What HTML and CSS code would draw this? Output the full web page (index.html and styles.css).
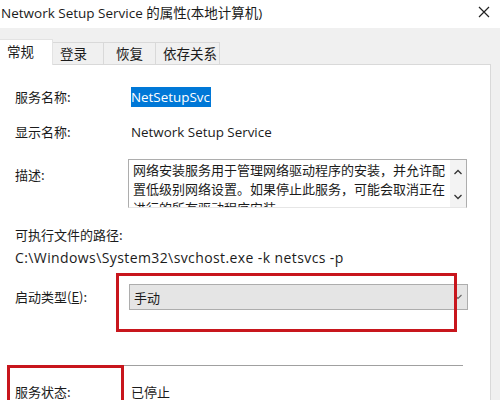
FILE: index.html
```html
<!DOCTYPE html>
<html lang="zh-CN">
<head>
    <meta charset="UTF-8">
    <meta name="viewport" content="width=device-width, initial-scale=1.0">
    <title>Network Setup Service 的属性(本地计算机)</title>
    <link rel="stylesheet" href="styles.css">
</head>
<body>

<div class="window">
    <div class="titlebar">
        <span class="title">Network Setup Service 的属性(本地计算机)</span>
        <svg class="close" width="12" height="12" viewBox="0 0 12 12">
            <path d="M1 1 L11 11 M11 1 L1 11" stroke="#222" stroke-width="1.2" fill="none"/>
        </svg>
    </div>

    <div class="tabstrip">
        <div class="tab active">常规</div>
        <div class="tab">登录</div>
        <div class="tab">恢复</div>
        <div class="tab">依存关系</div>
    </div>

    <div class="panel">
        <div class="row row-name">
            <span class="label">服务名称:</span>
            <span class="value"><span class="selected">NetSetupSvc</span></span>
        </div>
        <div class="row row-display">
            <span class="label">显示名称:</span>
            <span class="value">Network Setup Service</span>
        </div>
        <div class="row row-desc">
            <span class="label">描述:</span>
            <div class="textbox">
                <div class="textbox-text">网络安装服务用于管理网络驱动程序的安装，并允许配置低级别网络设置。如果停止此服务，可能会取消正在进行的所有驱动程序安装</div>
                <div class="scroll">
                    <svg width="10" height="8" viewBox="0 0 10 8"><path d="M1.5 6 L5 2.5 L8.5 6" stroke="#333" stroke-width="1.3" fill="none"/></svg>
                    <svg width="10" height="8" viewBox="0 0 10 8"><path d="M1.5 2 L5 5.5 L8.5 2" stroke="#333" stroke-width="1.3" fill="none"/></svg>
                </div>
            </div>
        </div>
        <div class="path-label">可执行文件的路径:</div>
        <div class="path">C:\Windows\System32\svchost.exe -k netsvcs -p</div>
        <div class="row row-startup">
            <span class="label">启动类型(<u>E</u>):</span>
            <div class="combo-wrap">
                <div class="combo">
                    <span>手动</span>
                    <svg width="10" height="8" viewBox="0 0 10 8"><path d="M1.5 2 L5 5.5 L8.5 2" stroke="#666" stroke-width="1.1" fill="none"/></svg>
                </div>
                <div class="mark mark-combo"></div>
            </div>
        </div>
        <div class="separator"></div>
        <div class="row row-status">
            <span class="label">服务状态:</span>
            <span class="value">已停止</span>
            <div class="mark mark-status"></div>
        </div>
    </div>
</div>

</body>
</html>
```

FILE: styles.css
```css
body {
    margin: 0;
    padding: 0;
    width: 500px;
    height: 400px;
    overflow: hidden;
    background-color: #f0f0f0;
    font-family: "Open Sans", "Noto Sans CJK SC", sans-serif;
    font-size: 13px;
    color: #1b1b1b;
}

.window {
    height: 400px;
    display: flex;
    flex-direction: column;
}

.titlebar {
    height: 28px;
    background-color: #fff;
    display: flex;
    align-items: center;
    justify-content: space-between;
    padding: 0 10px 4px 1px;
    box-sizing: border-box;
    font-size: 13.5px;
}

.tabstrip {
    height: 36px;
    display: flex;
    align-items: flex-end;
    padding-right: 10px;
}

.tab {
    height: 22px;
    box-sizing: border-box;
    padding: 0 6px 0 8px;
    line-height: 21px;
    white-space: nowrap;
    border: 1px solid #d9d9d9;
    border-bottom: none;
    border-left: none;
    background-color: #f0f0f0;
    font-family: "Noto Sans CJK SC", sans-serif;
    font-size: 13.5px;
}

.tab:nth-child(2) { width: 51px; padding-left: 7px; }
.tab:nth-child(3) { width: 52px; padding-left: 12px; }
.tab:nth-child(4) { width: 64px; padding-left: 7px; }

.tab.active {
    width: 53px;
    height: 26px;
    margin-bottom: -1px;
    padding-left: 7px;
    line-height: 22px;
    background-color: #fff;
    border-color: #e3e3e3;
    position: relative;
}

.panel {
    flex: 1;
    margin-right: 9px;
    background-color: #fff;
    border-top: 1px solid #d9d9d9;
    border-right: 1px solid #d9d9d9;
    padding: 23px 0 0 15px;
    overflow: hidden;
}

.row {
    display: grid;
    grid-template-columns: 116px 1fr;
    align-items: center;
    position: relative;
}

.label,
.path-label {
    font-family: "Noto Sans CJK SC", sans-serif;
    line-height: 18px;
}

.value {
    line-height: 18px;
    font-size: 13.4px;
}

.row-status .value {
    font-family: "Noto Sans CJK SC", sans-serif;
    font-size: 13px;
}

.selected {
    background-color: #0078d7;
    color: #fff;
    padding: 1px 1px 1px 0;
}

.row-display {
    margin-top: 17px;
}

.row-desc {
    margin-top: 18px;
    align-items: start;
}

.row-desc .label {
    padding-top: 7px;
}

.textbox {
    margin-left: -3px;
    width: 339px;
    height: 49px;
    box-sizing: border-box;
    border: 1px solid #adadad;
    border-bottom-color: #e6e6e6;
    display: flex;
    overflow: hidden;
}

.textbox-text {
    flex: 1;
    padding: 0 0 0 4px;
    font-family: "Noto Sans CJK SC", sans-serif;
    line-height: 19px;
}

.scroll {
    width: 16px;
    background-color: #f3f3f3;
    display: flex;
    flex-direction: column;
    align-items: center;
    justify-content: space-between;
    padding: 8px 0 6px;
}

.path-label {
    margin-top: 18px;
}

.path {
    margin-top: 5px;
    line-height: 18px;
    font-size: 14px;
    letter-spacing: 0.4px;
}

.row-startup {
    margin-top: 17px;
}

.combo-wrap {
    position: relative;
    margin-left: -2px;
}

.combo {
    width: 339px;
    height: 26px;
    box-sizing: border-box;
    background-color: #e5e5e5;
    border: 1px solid #adadad;
    display: flex;
    align-items: center;
    justify-content: space-between;
    padding: 0 4px 0 4px;
    font-family: "Noto Sans CJK SC", sans-serif;
}

.mark {
    position: absolute;
    border: 3px solid #c8161d;
    box-sizing: border-box;
}

.mark-combo {
    left: -13px;
    top: -11px;
    width: 341px;
    height: 59px;
}

.separator {
    margin-top: 55px;
    width: 448px;
    border-top: 1px solid #a0a0a0;
}

.row-status {
    margin-top: 17px;
}

.mark-status {
    left: -8px;
    top: -18px;
    width: 117px;
    height: 60px;
}
```
